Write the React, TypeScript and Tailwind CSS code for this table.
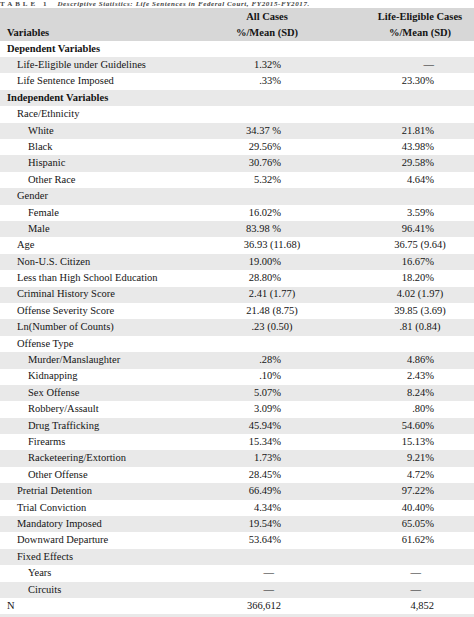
type Row = {
  label: string;
  level: 0 | 1 | 2;
  bold?: boolean;
  a?: string;
  b?: string;
  kind?: "pct" | "sd" | "dash";
};

const rows: Row[] = [
  { label: "Dependent Variables", level: 0, bold: true },
  { label: "Life-Eligible under Guidelines", level: 1, a: "1.32%", b: "—" },
  { label: "Life Sentence Imposed", level: 1, a: ".33%", b: "23.30%" },
  { label: "Independent Variables", level: 0, bold: true },
  { label: "Race/Ethnicity", level: 1 },
  { label: "White", level: 2, a: "34.37 %", b: "21.81%" },
  { label: "Black", level: 2, a: "29.56%", b: "43.98%" },
  { label: "Hispanic", level: 2, a: "30.76%", b: "29.58%" },
  { label: "Other Race", level: 2, a: "5.32%", b: "4.64%" },
  { label: "Gender", level: 1 },
  { label: "Female", level: 2, a: "16.02%", b: "3.59%" },
  { label: "Male", level: 2, a: "83.98 %", b: "96.41%" },
  { label: "Age", level: 1, a: "36.93 (11.68)", b: "36.75 (9.64)", kind: "sd" },
  { label: "Non-U.S. Citizen", level: 1, a: "19.00%", b: "16.67%" },
  { label: "Less than High School Education", level: 1, a: "28.80%", b: "18.20%" },
  { label: "Criminal History Score", level: 1, a: "2.41 (1.77)", b: "4.02 (1.97)", kind: "sd" },
  { label: "Offense Severity Score", level: 1, a: "21.48 (8.75)", b: "39.85 (3.69)", kind: "sd" },
  { label: "Ln(Number of Counts)", level: 1, a: ".23 (0.50)", b: ".81 (0.84)", kind: "sd" },
  { label: "Offense Type", level: 1 },
  { label: "Murder/Manslaughter", level: 2, a: ".28%", b: "4.86%" },
  { label: "Kidnapping", level: 2, a: ".10%", b: "2.43%" },
  { label: "Sex Offense", level: 2, a: "5.07%", b: "8.24%" },
  { label: "Robbery/Assault", level: 2, a: "3.09%", b: ".80%" },
  { label: "Drug Trafficking", level: 2, a: "45.94%", b: "54.60%" },
  { label: "Firearms", level: 2, a: "15.34%", b: "15.13%" },
  { label: "Racketeering/Extortion", level: 2, a: "1.73%", b: "9.21%" },
  { label: "Other Offense", level: 2, a: "28.45%", b: "4.72%" },
  { label: "Pretrial Detention", level: 1, a: "66.49%", b: "97.22%" },
  { label: "Trial Conviction", level: 1, a: "4.34%", b: "40.40%" },
  { label: "Mandatory Imposed", level: 1, a: "19.54%", b: "65.05%" },
  { label: "Downward Departure", level: 1, a: "53.64%", b: "61.62%" },
  { label: "Fixed Effects", level: 1 },
  { label: "Years", level: 2, a: "—", b: "—", kind: "dash" },
  { label: "Circuits", level: 2, a: "—", b: "—", kind: "dash" },
  { label: "N", level: 0, a: "366,612", b: "4,852" },
];

const indent = ["pl-[7px]", "pl-[17px]", "pl-[28px]"];

function ValueA({ v, kind }: { v?: string; kind?: Row["kind"] }) {
  if (!v) return <div className="w-[134px]" />;
  if (kind === "sd") return <div className="w-[134px] pl-[10px] text-center">{v}</div>;
  if (kind === "dash") return <div className="w-[134px] pr-[60px] text-right">{v}</div>;
  return <div className="w-[134px] pr-[53px] text-right">{v}</div>;
}

function ValueB({ v, kind }: { v?: string; kind?: Row["kind"] }) {
  if (!v) return <div className="w-[108px]" />;
  if (kind === "sd") return <div className="w-[108px] text-center">{v}</div>;
  if (kind === "dash") return <div className="w-[108px] pr-[53px] text-right">{v}</div>;
  return <div className="w-[108px] pr-[40px] text-right">{v}</div>;
}

export default function App() {
  return (
    <div className="w-[474px] h-[617px] overflow-hidden bg-white text-[#141414] font-['Liberation_Serif',serif] text-[10.5px]">
      {/* caption, mostly above the crop in the reference */}
      <div className="h-[8px] flex items-end whitespace-nowrap text-[7px] font-bold leading-none text-[#444]">
        <span className="tracking-[3px] pr-[8px]">TABLE 1</span>
        <span className="italic tracking-[0.6px]">Descriptive Statistics: Life Sentences in Federal Court, FY2015-FY2017.</span>
      </div>

      {/* header */}
      <div className="h-[32.7px] bg-[#d7d7d7] flex font-bold leading-[16px]">
        <div className="w-[200px] pl-[7px] flex items-end">Variables</div>
        <div className="w-[134px] flex flex-col items-center justify-end">
          <span>All Cases</span>
          <span>%/Mean (SD)</span>
        </div>
        <div className="w-[32px]" />
        <div className="w-[108px] flex flex-col items-center justify-end">
          <span>Life-Eligible Cases</span>
          <span>%/Mean (SD)</span>
        </div>
      </div>

      {rows.map((r, i) => (
        <div
          key={r.label}
          className={`h-[16.4px] flex items-center leading-none ${i % 2 === 1 ? "bg-[#e9e9e9]" : "bg-white"}`}
        >
          <div className={`w-[200px] whitespace-nowrap ${indent[r.level]} ${r.bold ? "font-bold" : ""}`}>{r.label}</div>
          <ValueA v={r.a} kind={r.kind} />
          <div className="w-[32px]" />
          <ValueB v={r.b} kind={r.kind} />
        </div>
      ))}
      <div className="h-[10px] bg-[#e9e9e9]" />
    </div>
  );
}
